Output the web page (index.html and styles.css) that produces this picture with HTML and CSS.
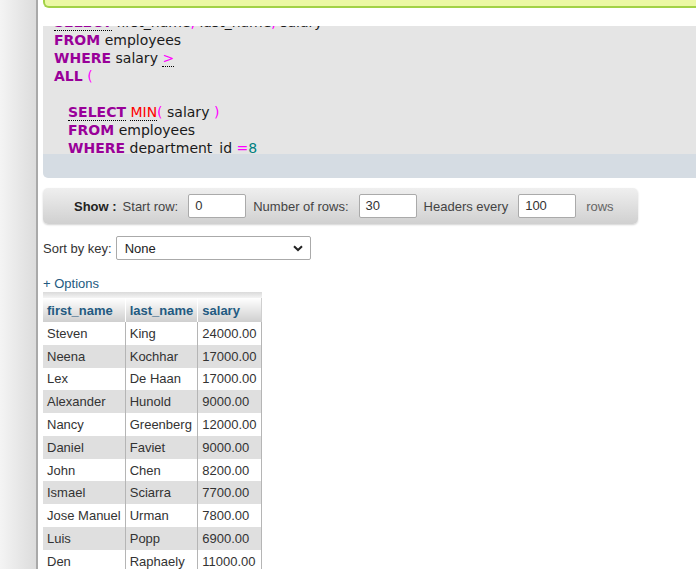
FILE: index.html
```html
<!DOCTYPE html>
<html>
<head>
<meta charset="utf-8">
<link rel="stylesheet" href="styles.css">
</head>
<body>
<div class="page">
  <aside class="nav-panel"></aside>
  <main class="main">
    <div class="success"></div>
    <div class="sql-box">
      <div class="sql-code">
<pre class="code"><span class="kw ul">SELECT</span> first_name<span class="op">,</span> last_name<span class="op">,</span> salary
<span class="kw">FROM</span> employees
<span class="kw">WHERE</span> salary <span class="op ul">&gt;</span>
<span class="kw">ALL</span> <span class="op">(</span>

<span class="ind"><span class="kw ul">SELECT</span> <span class="fn ul">MIN</span><span class="op">(</span> salary <span class="op">)</span></span>
<span class="ind"><span class="kw">FROM</span> employees</span>
<span class="ind"><span class="kw">WHERE</span> department_id <span class="op">=</span><span class="num">8</span></span></pre>
      </div>
      <div class="sql-tools"></div>
    </div>

    <div class="navbar">
      <span class="show">Show :</span>
      <span class="lbl">Start row:</span>
      <span class="inp">0</span>
      <span class="lbl">Number of rows:</span>
      <span class="inp">30</span>
      <span class="lbl">Headers every</span>
      <span class="inp">100</span>
      <span class="lbl rows">rows</span>
    </div>

    <div class="sortrow">
      <span class="sortlbl">Sort by key:</span>
      <div class="select">
        <span>None</span>
        <svg width="10" height="7" viewBox="0 0 10 7"><path d="M1 1.2 L5 5 L9 1.2" fill="none" stroke="#222" stroke-width="2"/></svg>
      </div>
    </div>

    <div class="options">+ Options</div>

    <div class="results">
      <div class="band"></div>
      <table class="data">
        <thead>
          <tr><th>first_name</th><th>last_name</th><th>salary</th></tr>
        </thead>
        <tbody>
          <tr><td>Steven</td><td>King</td><td>24000.00</td></tr>
          <tr><td>Neena</td><td>Kochhar</td><td>17000.00</td></tr>
          <tr><td>Lex</td><td>De Haan</td><td>17000.00</td></tr>
          <tr><td>Alexander</td><td>Hunold</td><td>9000.00</td></tr>
          <tr><td>Nancy</td><td>Greenberg</td><td>12000.00</td></tr>
          <tr><td>Daniel</td><td>Faviet</td><td>9000.00</td></tr>
          <tr><td>John</td><td>Chen</td><td>8200.00</td></tr>
          <tr><td>Ismael</td><td>Sciarra</td><td>7700.00</td></tr>
          <tr><td>Jose Manuel</td><td>Urman</td><td>7800.00</td></tr>
          <tr><td>Luis</td><td>Popp</td><td>6900.00</td></tr>
          <tr><td>Den</td><td>Raphaely</td><td>11000.00</td></tr>
        </tbody>
      </table>
    </div>
  </main>
</div>
</body>
</html>
```
FILE: styles.css
```css
html, body {
  margin: 0;
  padding: 0;
  height: 100%;
  overflow: hidden;
  background: #fff;
}
.page {
  display: flex;
  height: 100%;
  font-family: "Liberation Sans", Arial, sans-serif;
  font-size: 13px;
  color: #333;
}
.nav-panel {
  width: 36px;
  flex: none;
  background: linear-gradient(to right, #f4f4f4, #dcdcdc);
  border-right: 2px solid #a9a9a9;
}
.main {
  flex: 1;
  min-width: 0;
  padding-left: 5px;
  overflow: hidden;
}
.success {
  height: 6px;
  background: #ebf8a4;
  border-left: 2px solid #a2d246;
  border-bottom: 2px solid #a2d246;
  border-bottom-left-radius: 6px;
}
.sql-box {
  margin-top: 18px;
  border-bottom-left-radius: 5px;
  overflow: hidden;
}
.sql-code {
  height: 128px;
  overflow: hidden;
  background: #e5e5e5;
}
.code {
  margin: -13px 0 0 0;
  padding-left: 11px;
  font-family: "DejaVu Sans", Verdana, sans-serif;
  font-size: 14px;
  line-height: 18px;
  color: #1a1a1a;
  white-space: pre;
}
.kw { color: #990099; font-weight: bold; }
.op { color: #ff00ff; }
.fn { color: #ff0000; }
.num { color: #008080; }
.ul { border-bottom: 1px dotted #000; }
.ind { padding-left: 14px; }
.sql-tools {
  height: 24px;
  background: #d5dce3;
}
.navbar {
  margin-top: 10px;
  width: 595px;
  height: 36px;
  box-sizing: border-box;
  display: flex;
  align-items: center;
  padding-left: 31px;
  border-radius: 5px;
  background: linear-gradient(to bottom, #efefef, #d0d0d0);
  box-shadow: 0 1px 2px rgba(0, 0, 0, 0.18);
  color: #444;
}
.show {
  font-weight: bold;
  color: #222;
  margin-right: 6px;
}
.lbl { margin-right: 10px; }
.rows { color: #666; margin-left: 3px; }
.inp {
  width: 58px;
  height: 24px;
  box-sizing: border-box;
  background: #fff;
  border: 1px solid #aaa;
  border-radius: 2px;
  padding-left: 6px;
  line-height: 22px;
  color: #333;
  margin-right: 7px;
}
.sortrow {
  margin-top: 12px;
  display: flex;
  align-items: center;
  height: 24px;
}
.sortlbl { margin-right: 4px; }
.select {
  width: 195px;
  height: 24px;
  box-sizing: border-box;
  border: 1px solid #aaa;
  border-radius: 2px;
  background: #fff;
  display: flex;
  align-items: center;
  justify-content: space-between;
  padding: 0 7px 0 8px;
  color: #222;
}
.options {
  margin-top: 16px;
  color: #235a81;
  line-height: 15px;
}
.results {
  display: inline-block;
  margin-top: 1px;
}
.band {
  height: 6px;
  background: linear-gradient(to bottom, #dadada, #f4f4f4);
}
.data {
  border-collapse: collapse;
}
.data th {
  text-align: left;
  font-weight: bold;
  color: #235a81;
  padding: 0 4px;
  height: 24px;
  background: linear-gradient(to bottom, #ffffff, #cfcfcf);
  border-right: 1px solid #ffffff;
}
.data th:last-child { border-right: 1px solid #cfcfcf; }
.data td {
  padding: 3.9px 4px;
  line-height: 15px;
  border-right: 1px solid #b5b5b5;
  color: #333;
  white-space: nowrap;
}
.data tbody tr:nth-child(even) td { background: #dfdfdf; }
```
